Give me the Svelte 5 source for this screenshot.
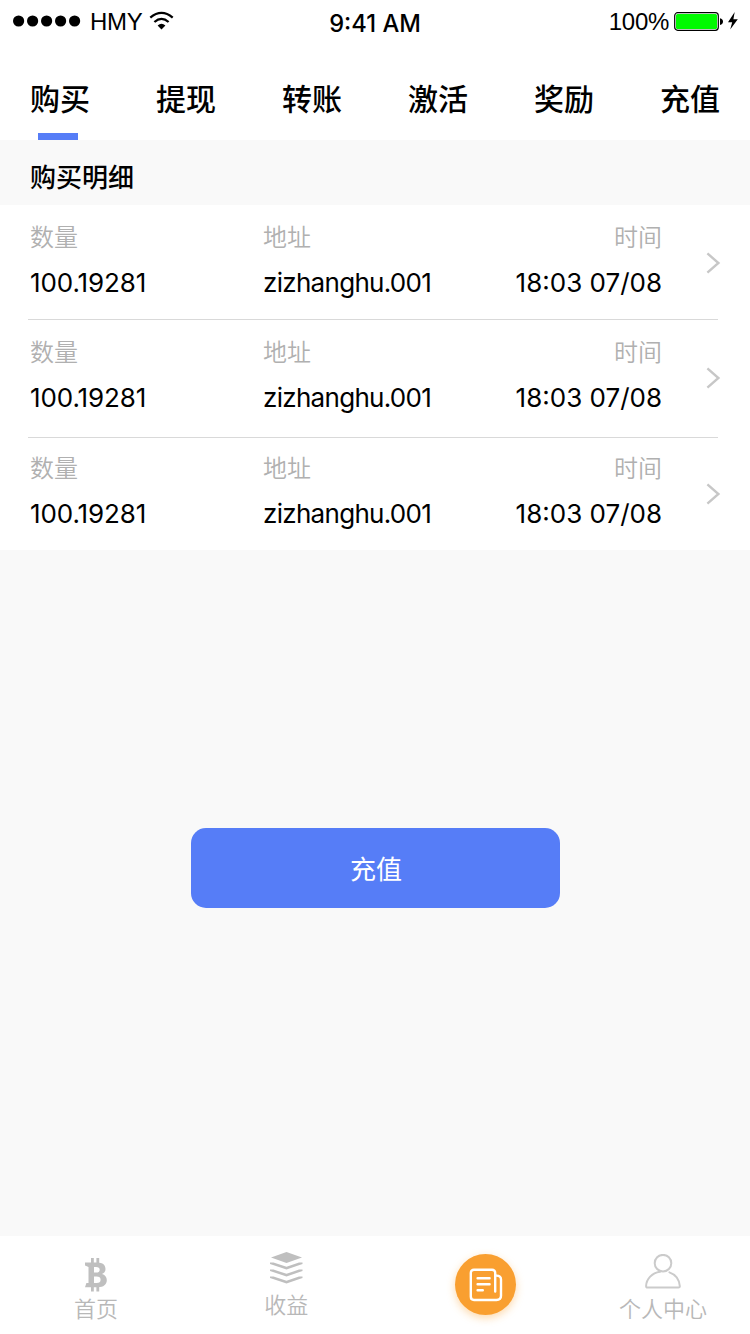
<script lang="ts">
  type Row = {
    amount: string,
    address: string,
    time: string,
  }

  const tabs = ['购买', '提现', '转账', '激活', '奖励', '充值']

  const rows: Row[] = [
    { amount: '100.19281', address: 'zizhanghu.001', time: '18:03 07/08' },
    { amount: '100.19281', address: 'zizhanghu.001', time: '18:03 07/08' },
    { amount: '100.19281', address: 'zizhanghu.001', time: '18:03 07/08' },
  ]

  let active = $state(0)
</script>

<div class="screen">
  <header class="status">
    <div class="carrier">
      <svg width="68" height="12" viewBox="0 0 68 12">
        {#each [0, 1, 2, 3, 4] as dot}
          <circle cx={5.6 + dot * 14} cy="6" r="5.6"/>
        {/each}
      </svg>
      <span class="name">HMY</span>
      <svg class="wifi" width="26" height="20" viewBox="0 0 26 20">
        <g fill="none" stroke="#000" stroke-width="2.3">
          <path d="M1.3 6.6 Q12.5 -2.8 23.7 6.6"/>
          <path d="M5.4 11 Q12.5 4.8 19.6 11"/>
        </g>
        <path d="M8.6 14.4 Q12.5 11 16.4 14.4 L12.5 18.6 Z"/>
      </svg>
    </div>
    <span class="clock">9:41 AM</span>
    <div class="power">
      <span class="percent">100%</span>
      <svg width="66" height="20" viewBox="0 0 66 20">
        <rect x=".7" y=".7" width="43.6" height="17.6" rx="3" fill="#fff" stroke="#000" stroke-width="1.2"/>
        <rect x="2" y="2" width="41" height="15" rx="1.5" fill="#00fa00"/>
        <path d="M46 6.2 Q49 7 49 9.6 Q49 12.2 46 13 Z"/>
        <path d="M60.7 0 L54 10.2 L58.2 10.2 L56.2 17.5 L63.8 7.2 L59.4 7.2 Z"/>
      </svg>
    </div>
  </header>

  <nav class="tabs">
    {#each tabs as tab, i}
      <button class:active={active === i} onclick={() => active = i}>{tab}</button>
    {/each}
  </nav>

  <h1>购买明细</h1>

  <ul class="list">
    {#each rows as row}
      <li>
        <div class="cell amount">
          <span class="label">数量</span>
          <span class="value">{row.amount}</span>
        </div>
        <div class="cell address">
          <span class="label">地址</span>
          <span class="value">{row.address}</span>
        </div>
        <div class="cell time">
          <span class="label">时间</span>
          <span class="value">{row.time}</span>
        </div>
        <svg class="chevron" width="15" height="22" viewBox="0 0 15 22">
          <path d="M1.4 1.4 L12.4 11 L1.4 20.6" fill="none" stroke="#c7c7c7" stroke-width="2.4"/>
        </svg>
      </li>
    {/each}
  </ul>

  <main>
    <button class="recharge">充值</button>
  </main>

  <footer>
    <a class="home" href="#home">
      <svg width="22" height="34" viewBox="0 0 22 34" fill="#bfbfbf">
        <path d="M6 0h2.8v6H6zM11.4 0h2.8v6h-2.8zM6 28h2.8v5.5H6zM11.4 28h2.8v5.5h-2.8z"/>
        <path fill-rule="evenodd" d="M0 4.5 H12 C18 4.5 20.5 7.3 20.5 11 C20.5 13.5 19.2 15.2 17 16 C20 16.8 21.8 19 21.8 22 C21.8 26.6 18.5 29.2 13 29.2 H0 L1.4 25 H3.5 V9 L0 7.5 Z M9 9 V14.6 H11 C13.6 14.6 14.7 13.6 14.7 11.8 C14.7 9.9 13.5 9 11 9 Z M9 18.6 V25 H11.6 C14.3 25 15.6 23.9 15.6 21.8 C15.6 19.6 14.3 18.6 11.6 18.6 Z"/>
      </svg>
      <span>首页</span>
    </a>
    <a class="income" href="#income">
      <svg width="34" height="32" viewBox="0 0 34 32" fill="#bfbfbf">
        <path d="M17.5 0 L33 5.4 L17.5 11 L2 5.4 Z"/>
        <path d="M1 10.6 L4.5 10.6 L17.5 14.8 L30 10.6 L33.5 10.6 L33.5 12 L17.5 17.4 L1 12 Z"/>
        <path d="M1 17.6 L4.5 17.6 L17.5 21.8 L30 17.6 L33.5 17.6 L33.5 19 L17.5 24.4 L1 19 Z"/>
        <path d="M1 24.6 L4.5 24.6 L17.5 28.8 L30 24.6 L33.5 24.6 L33.5 26 L17.5 31.4 L1 26 Z"/>
      </svg>
      <span>收益</span>
    </a>
    <a class="orders" href="#orders" aria-label="orders">
      <svg width="34" height="34" viewBox="0 0 34 34" fill="none" stroke="#fff" stroke-width="2.4" stroke-linecap="round">
        <path d="M26.2 23.5 V5 C26.2 3 25 1.8 23 1.8 H5 C3 1.8 1.8 3 1.8 5 V28.6 C1.8 30.8 3 32 5 32 H27.5 C30.5 32 32 30.6 32 27.8 V11.5 C32 9 30.5 7.6 27.5 7.6"/>
        <path d="M8.6 10.2 H20.6 M8.6 16.2 H20.6 M8.6 22.2 H13.8"/>
      </svg>
    </a>
    <a class="profile" href="#profile">
      <svg width="36" height="35" viewBox="0 0 36 35" fill="none" stroke="#cbcbcb" stroke-width="2" stroke-linecap="round">
        <circle cx="18" cy="9.2" r="8.3"/>
        <path d="M15 17.8 C7 19 1.4 24.8 1.1 32 Q1 33.6 2.6 33.6 H33.4 Q35 33.6 34.8 32 C34.2 25.8 30.8 20.6 24.4 18.4"/>
      </svg>
      <span>个人中心</span>
    </a>
  </footer>
</div>

<style>
  :global(body) {
    margin: 0;
  }

  .screen {
    display: flex;
    flex-direction: column;
    width: 750px;
    height: 1334px;
    overflow: hidden;
    background: #f9f9f9;
    color: #000;
    font-family: Inter, "Noto Sans CJK SC", sans-serif;
  }

  button {
    padding: 0;
    border: 0;
    background: none;
    color: inherit;
    font: inherit;
  }

  .status {
    display: grid;
    grid-template-columns: 1fr auto 1fr;
    align-items: start;
    height: 40px;
    padding: 0 10px 0 13px;
    box-sizing: border-box;
    background: #fff;
    font-size: 24px;
    line-height: 40px;
  }

  .carrier, .power {
    display: flex;
    align-items: center;
    height: 40px;
    margin-top: 2px;
    font-family: "Liberation Sans", Arial, sans-serif;
  }

  .carrier svg {
    margin-top: -2px;
  }

  .name {
    margin: 0 7px 0 9px;
    letter-spacing: -.3px;
  }

  .clock {
    padding-top: 4px;
    margin-left: -3px;
    font-size: 23.7px;
    font-weight: 500;
  }

  .power {
    justify-content: flex-end;
    gap: 5px;
  }

  .percent {
    letter-spacing: -.3px;
  }

  .tabs {
    display: flex;
    justify-content: space-between;
    height: 100px;
    padding: 0 30px;
    background: #fff;

    button {
      position: relative;
      padding-top: 18px;
      font-size: 30px;
      font-weight: 500;
      line-height: 44px;
    }

    .active::after {
      content: '';
      position: absolute;
      left: 8px;
      bottom: 0;
      width: 40px;
      height: 7px;
      background: #567df7;
    }
  }

  h1 {
    margin: 0;
    padding-left: 30px;
    height: 65px;
    font-size: 26px;
    font-weight: 500;
    line-height: 75px;
  }

  .list {
    margin: 0;
    padding: 0 32px 0 28px;
    background: #fff;
    list-style: none;

    li {
      display: flex;
      height: 115px;
      padding: 13px 0 0 2px;
      box-sizing: border-box;
      border-bottom: 1px solid #d9d9d9;
    }

    li:nth-child(2) {
      height: 118px;
    }

    li:last-child {
      height: 112px;
      padding-top: 11px;
      border-bottom: 0;
    }
  }

  .cell {
    display: flex;
    flex: none;
    flex-direction: column;
    white-space: nowrap;
  }

  .label {
    height: 40px;
    color: #b0b0b0;
    font-size: 24px;
    font-weight: 350;
    line-height: 40px;
  }

  .value {
    font-size: 26px;
    line-height: 49px;
  }

  .amount {
    width: 233px;

    .value {
      letter-spacing: -.1px;
    }
  }

  .address {
    width: 219px;

    .value {
      letter-spacing: -.7px;
    }
  }

  .time {
    width: 180px;
    align-items: flex-end;
  }

  .chevron {
    flex: none;
    margin: 34px 0 0 44px;
  }

  main {
    flex: 1;
    display: flex;
    justify-content: center;
    padding: 278px 0 0 1px;
  }

  .recharge {
    width: 369px;
    height: 80px;
    padding: 0 0 2px 1px;
    border-radius: 15px;
    background: #567df7;
    color: #fff;
    font-size: 26px;
    font-weight: 400;
  }

  footer {
    display: flex;
    justify-content: space-between;
    height: 98px;
    padding: 0 43px 0 74px;
    box-sizing: border-box;
    background: #fff;

    a {
      display: flex;
      flex-direction: column;
      align-items: center;
      color: #b8b8b8;
      font-size: 22px;
      font-weight: 350;
      line-height: 32px;
      text-decoration: none;
    }
  }

  .home {
    padding-top: 22px;

    span {
      margin-top: 1px;
    }
  }

  .income {
    padding-top: 16px;

    span {
      margin-top: 5px;
    }
  }

  footer .orders {
    justify-content: center;
    width: 61px;
    height: 61px;
    margin: 18px -43px 0 0;
    border-radius: 50%;
    background: #f99f30;
    box-shadow: 0 3px 8px rgba(249, 159, 48, .4);

    svg {
      margin: 1px 0 0 1px;
    }
  }

  .profile {
    padding-top: 18px;

    span {
      margin-top: 4px;
    }
  }
</style>
